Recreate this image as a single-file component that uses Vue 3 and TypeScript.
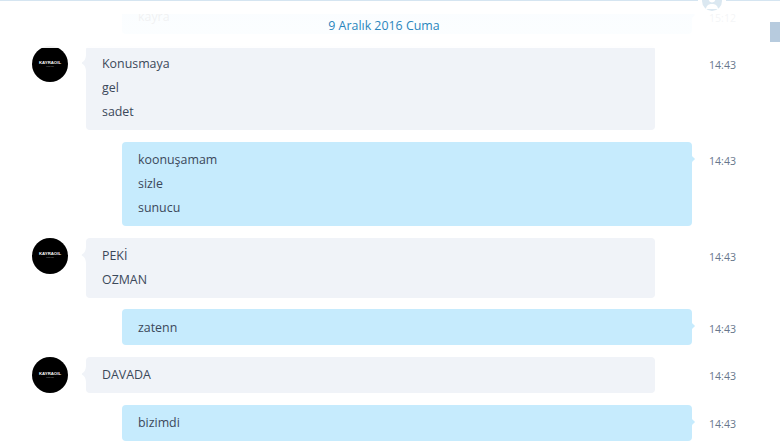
<script setup lang="ts">
interface Message {
  id: number
  own: boolean
  lines: string[]
  time: string
  faded?: boolean
}

const messages: Message[] = [
  { id: 0, own: true, lines: ['kayra'], time: '15:12', faded: true },
  { id: 1, own: false, lines: ['Konusmaya', 'gel', 'sadet'], time: '14:43' },
  { id: 2, own: true, lines: ['koonuşamam', 'sizle', 'sunucu'], time: '14:43' },
  { id: 3, own: false, lines: ['PEKİ', 'OZMAN'], time: '14:43' },
  { id: 4, own: true, lines: ['zatenn'], time: '14:43' },
  { id: 5, own: false, lines: ['DAVADA'], time: '14:43' },
  { id: 6, own: true, lines: ['bizimdi'], time: '14:43' },
]
</script>

<template>
  <main class="chat">
    <div class="topline"></div>
    <div class="presence">
      <svg viewBox="0 0 20 20" width="20" height="20">
        <circle cx="10" cy="10" r="10" fill="#dbe8f1" />
        <circle cx="10" cy="8" r="3.400" fill="#fff" />
        <path d="M3.800 18c.8-4 3.200-5 6.200-5s5.400 1 6.200 5z" fill="#fff" />
      </svg>
    </div>
    <header class="date-bar">9 Aralık 2016 Cuma</header>
    <div class="scrollbar"></div>

    <section class="list">
      <article v-for="m in messages" :key="m.id" class="row" :class="{ own: m.own, faded: m.faded }">
        <div class="avatar" v-if="!m.own">
          <span class="brand">KAYRAOIL</span>
          <span class="sub">official chat</span>
        </div>
        <div class="bubble">
          <svg v-if="m.own" class="tail tail-own" viewBox="0 0 5 18" width="5" height="18">
            <path d="M0 0c.2 4 .8 7 3.300 8q1 1 0 2C.8 11 .2 14 0 18z" />
          </svg>
          <svg v-else class="tail tail-in" viewBox="0 0 5 16" width="5" height="16">
            <path d="M5 0C4.800 3 4 6 1.200 7.200q-1 .8 0 1.600C4 10 4.800 13 5 16z" />
          </svg>
          <p v-for="(line, i) in m.lines" :key="i">{{ line }}</p>
        </div>
        <time class="time">{{ m.time }}</time>
      </article>
    </section>
  </main>
</template>

<style>
html,
body {
  margin: 0;
  background: #fff;
  overflow: hidden;
}
</style>

<style scoped>
.chat {
  position: relative;
  width: 780px;
  height: 445px;
  overflow: hidden;
  background: #fff;
  font-family: "Open Sans", "Noto Sans", sans-serif;
  font-size: 12.400px;
  color: #3b485a;
}

.topline {
  position: absolute;
  inset: 0 0 auto 0;
  height: 1px;
  background: #d5e5f1;
  z-index: 3;
}

.presence {
  position: absolute;
  top: -9px;
  left: 698px;
  width: 20px;
  height: 20px;
  padding: 0 4px 1px;
  background: #fff;
  z-index: 4;
}

.date-bar {
  position: absolute;
  top: 0;
  left: 0;
  right: 0;
  height: 48px;
  padding: 3px 12px 0 0;
  display: flex;
  align-items: center;
  justify-content: center;
  box-sizing: border-box;
  color: #2a86bd;
  font-size: 12.400px;
  background: linear-gradient(#fff 14px, rgba(255, 255, 255, 0.92) 14px, rgba(255, 255, 255, 0.94) 100%);
  z-index: 2;
}

.scrollbar {
  position: absolute;
  top: 22px;
  right: 0;
  width: 10px;
  height: 20px;
  background: #b7cbde;
  z-index: 3;
}

.list {
  display: flex;
  flex-direction: column;
  gap: 11.800px;
  margin-top: -1.800px;
}

.row {
  display: flex;
  align-items: flex-start;
  padding-left: 32px;
}

.row.own {
  padding-left: 122px;
}

.avatar {
  flex: none;
  width: 36px;
  height: 36px;
  margin-right: 18px;
  border-radius: 50%;
  background: #000;
  color: #f4f4f4;
  display: flex;
  flex-direction: column;
  align-items: center;
  justify-content: center;
  font-family: "Liberation Sans", sans-serif;
  line-height: 1;
}

.brand {
  font-size: 4.300px;
  font-weight: 700;
  letter-spacing: 0;
}

.sub {
  font-size: 1.500px;
  margin-top: 1px;
  color: #999;
}

.bubble {
  position: relative;
  flex: none;
  box-sizing: border-box;
  width: 569px;
  margin-right: 54px;
  padding: 6.300px 16px 5.700px;
  background: #f0f3f8;
  border-radius: 4px;
}

.own .bubble {
  width: 570px;
  margin-right: 17px;
  background: #c6ebfd;
}

.bubble p {
  margin: 0;
  line-height: 24px;
}

.tail {
  position: absolute;
  display: block;
}

.tail-in {
  left: -5px;
  top: 9px;
  fill: #f0f3f8;
}

.tail-own {
  right: -4px;
  top: 8px;
  fill: #c6ebfd;
}

.time {
  flex: none;
  width: 40px;
  padding-top: 9.300px;
  line-height: 20px;
  font-size: 10.600px;
  color: #68778c;
}
</style>
